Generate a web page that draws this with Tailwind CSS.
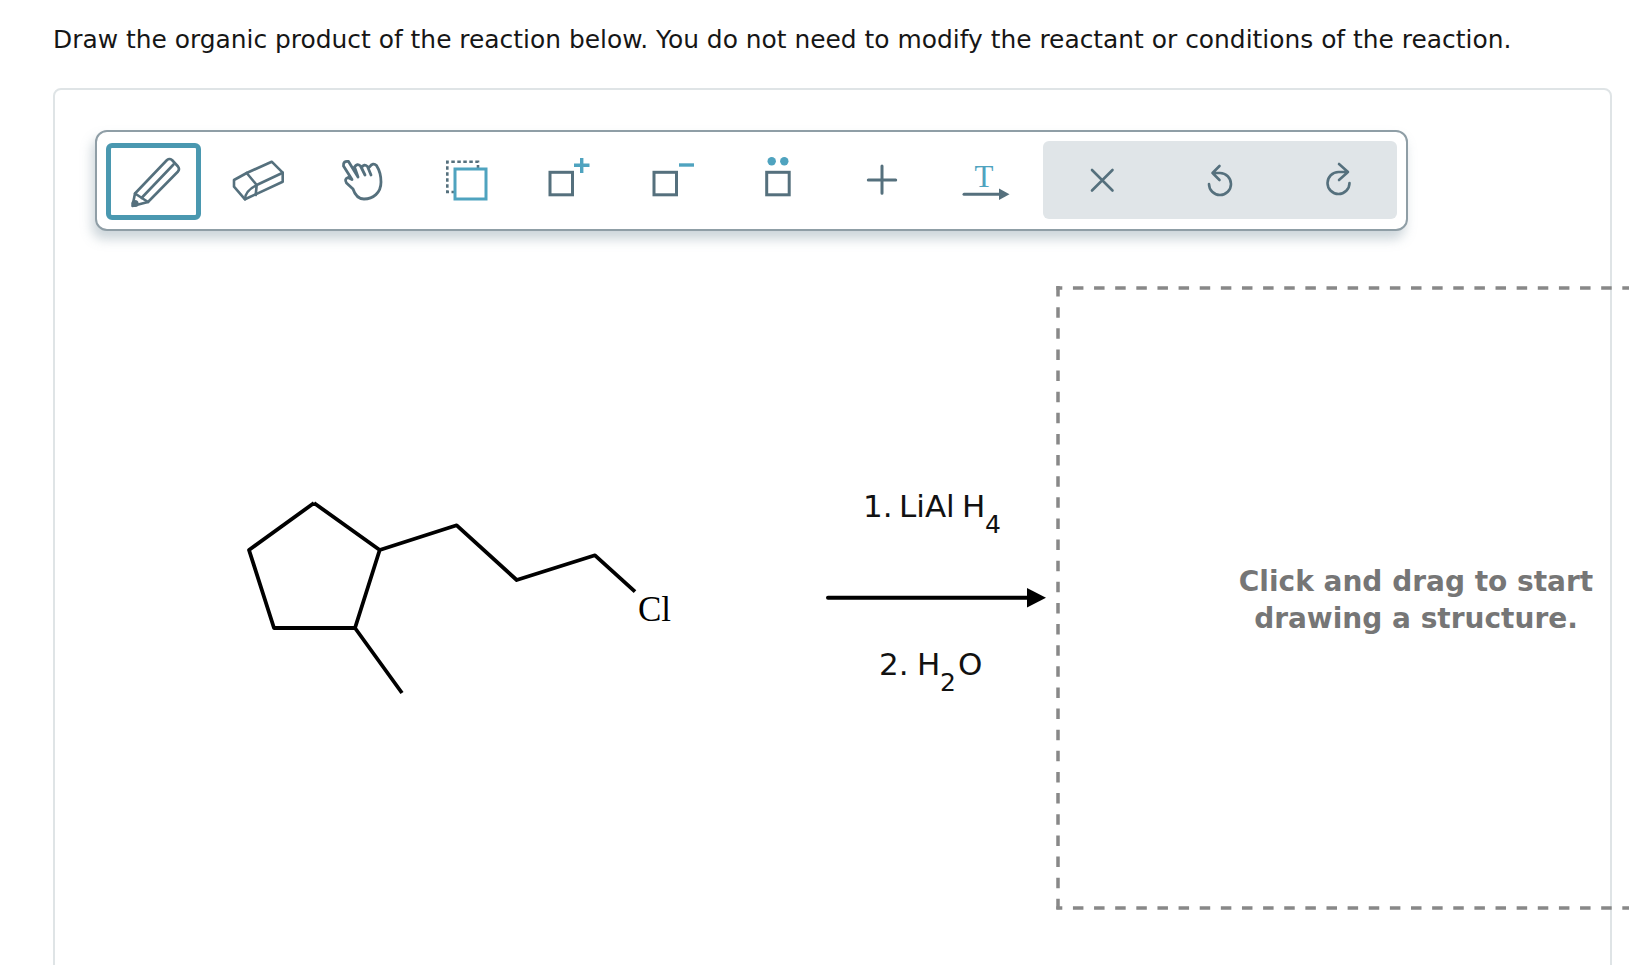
<!DOCTYPE html>
<html>
<head>
<meta charset="utf-8">
<script src="https://cdn.jsdelivr.net/npm/@tailwindcss/browser@4"></script>
</head>
<body class="bg-white">
<div class="relative w-[1629px] h-[965px] overflow-hidden font-['DejaVu_Sans',sans-serif]">
  <p class="pl-[53px] pt-[24px] h-[88px] text-[24.9px] leading-[32px] text-[#161616] whitespace-nowrap">Draw the organic product of the reaction below. You do not need to modify the reactant or conditions of the reaction.</p>
  <div class="ml-[53px] w-[1559px] h-[1000px] border-2 border-[#dfe4e6] rounded-lg pl-[40px] pt-[40px]">
    <div class="flex items-start w-[1313px] h-[101px] border-2 border-[#8f9ea6] rounded-xl bg-white pl-[9px] pt-[9px] shadow-[-3px_8px_12px_rgba(110,135,150,0.35)]">
      <button class="w-[95px] h-[77px] mt-[2px] border-[5px] border-[#4a98b0] rounded-md shrink-0">
        <svg class="block" width="85" height="67" viewBox="111 148 85 67" fill="none" stroke="#55707d" stroke-width="2.6" stroke-linejoin="round" stroke-linecap="round">
          <path d="M135 193.5L167 160Q169.500 158 172 160L178 166.500Q180 169 178 171.500L148 202L132.500 206Z"/>
          <path d="M135 193.500L148 202M141.500 198L173.500 164.500"/>
          <circle cx="135" cy="203.500" r="3.600" fill="#55707d" stroke="none"/>
        </svg>
      </button>
      <span class="w-[5px] shrink-0"></span>
      <svg class="shrink-0" width="105" height="78" viewBox="206 141 105 78" fill="none" stroke="#55707d" stroke-width="2.600" stroke-linejoin="round" stroke-linecap="round">
        <path d="M234 180L246.700 173L271.700 161.700L282.700 172.700V181.700L245 199.300L234 186.700Z"/>
        <path d="M246.700 173L256.700 185L282.700 172.700M256.700 185L255.700 195M245 199.300Q245 191 256.700 185"/>
      </svg>
      <svg class="shrink-0" width="105" height="78" viewBox="311 141 105 78" fill="none" stroke="#55707d" stroke-width="2.800" stroke-linejoin="round" stroke-linecap="round">
        <path d="M353 189L346.500 183Q344 179 348 177.500L352 179.500L343.500 166Q343 160.500 348.500 161.500L358 177M358 177L354.500 167Q357 163 360.500 166L365 175M365 175L361.500 167.500Q364 163.500 367.500 166.500L371 175M369.500 167Q373 162 376.500 165.500C380 171 381 176 381 182C381 193 373 199 364 199C358 199 355 195 353 189"/>
      </svg>
      <svg class="shrink-0" width="105" height="78" viewBox="416 141 105 78" fill="none">
        <path d="M455 192H447.300V161.700H478V168" stroke="#55707d" stroke-width="2.600" stroke-dasharray="3.500 2.500"/>
        <rect x="455" y="169" width="31" height="30" stroke="#4fa3bf" stroke-width="3"/>
      </svg>
      <svg class="shrink-0" width="105" height="78" viewBox="521 141 105 78" fill="none">
        <rect x="550" y="172.300" width="22.500" height="22.500" stroke="#55707d" stroke-width="3"/>
        <path d="M581.700 158V173M574 165.300H589.500" stroke="#4fa3bf" stroke-width="3.400"/>
      </svg>
      <svg class="shrink-0" width="105" height="78" viewBox="626 141 105 78" fill="none">
        <rect x="654" y="172.300" width="22.500" height="22.500" stroke="#55707d" stroke-width="3"/>
        <path d="M679 165H694" stroke="#4fa3bf" stroke-width="3.400"/>
      </svg>
      <svg class="shrink-0" width="105" height="78" viewBox="731 141 105 78" fill="none">
        <rect x="766.700" y="172.300" width="22.500" height="22.500" stroke="#55707d" stroke-width="3"/>
        <circle cx="771.700" cy="161.300" r="4.200" fill="#4fa3bf"/>
        <circle cx="784.300" cy="161.300" r="4.200" fill="#4fa3bf"/>
      </svg>
      <svg class="shrink-0" width="100" height="78" viewBox="836 141 100 78" fill="none">
        <path d="M882 166V193.300M868.300 180H895.700" stroke="#55707d" stroke-width="3" stroke-linecap="round"/>
      </svg>
      <svg class="shrink-0" width="107" height="78" viewBox="936 141 107 78" fill="none">
        <text x="984" y="187" text-anchor="middle" fill="#4fa3bf" font-size="31" font-family="'Liberation Serif',serif">T</text>
        <path d="M964 194.300H1000" stroke="#55707d" stroke-width="3" stroke-linecap="round"/>
        <path d="M999 188.500L1009.500 194.300L999 200Z" fill="#55707d"/>
      </svg>
      <div class="flex w-[354px] h-[78px] rounded-md bg-[#e0e5e8] shrink-0">
        <svg class="block" width="354" height="78" viewBox="1043 141 354 78" fill="none" stroke="#55707d" stroke-width="2.600" stroke-linecap="round" stroke-linejoin="round">
          <path d="M1092 170L1112.500 190.500M1112.500 170L1092 190.500"/>
          <path d="M1219.500 166L1212.500 173L1219.500 180M1212.500 173H1220A11 11 0 1 1 1209 184"/>
          <path d="M1339 164L1348 172L1339 180M1348 172H1338.500A11 11 0 1 0 1349.500 183"/>
        </svg>
      </div>
    </div>
  </div>

  <svg class="absolute left-0 top-0" width="1629" height="965" viewBox="0 0 1629 965" fill="none">
    <path d="M314 503L249 550L274 628H355L379.700 550L314 503M379.700 550L456.700 525.300L516.700 580L595 555.300L635 591.700M355 628L402 693" stroke="#000" stroke-width="3.800" stroke-linejoin="round"/>
    <text x="638" y="621" fill="#000" font-size="35" font-family="'Liberation Serif',serif">Cl</text>
    <text x="863" y="517" fill="#111" font-size="31" font-family="'DejaVu Sans',sans-serif">1.</text>
    <text x="899" y="517" fill="#111" font-size="31" font-family="'DejaVu Sans',sans-serif">LiAl</text>
    <text x="962" y="517" fill="#111" font-size="31" font-family="'DejaVu Sans',sans-serif">H</text>
    <text x="985" y="533" fill="#111" font-size="25" font-family="'DejaVu Sans',sans-serif">4</text>
    <path d="M828 597.700H1030" stroke="#000" stroke-width="4" stroke-linecap="round"/>
    <path d="M1027 588L1046 597.700L1027 607.500Z" fill="#000"/>
    <text x="879" y="675" fill="#111" font-size="31" font-family="'DejaVu Sans',sans-serif">2.</text>
    <text x="917" y="675" fill="#111" font-size="31" font-family="'DejaVu Sans',sans-serif">H</text>
    <text x="940" y="691" fill="#111" font-size="25" font-family="'DejaVu Sans',sans-serif">2</text>
    <text x="958" y="675" fill="#111" font-size="31" font-family="'DejaVu Sans',sans-serif">O</text>
    <path d="M1056.300 288H1640M1056.300 908H1640" stroke="#888" stroke-width="3.500" stroke-dasharray="10.500 10.630" stroke-dashoffset="4.500"/>
    <path d="M1058 286V910" stroke="#888" stroke-width="3.500" stroke-dasharray="10.500 10.630"/>
  </svg>
  <div class="absolute left-[1216px] top-[563px] w-[400px] text-center text-[28px] leading-[37px] font-bold text-[#767676]">Click and drag to start<br>drawing a structure.</div>
</div>
</body>
</html>
